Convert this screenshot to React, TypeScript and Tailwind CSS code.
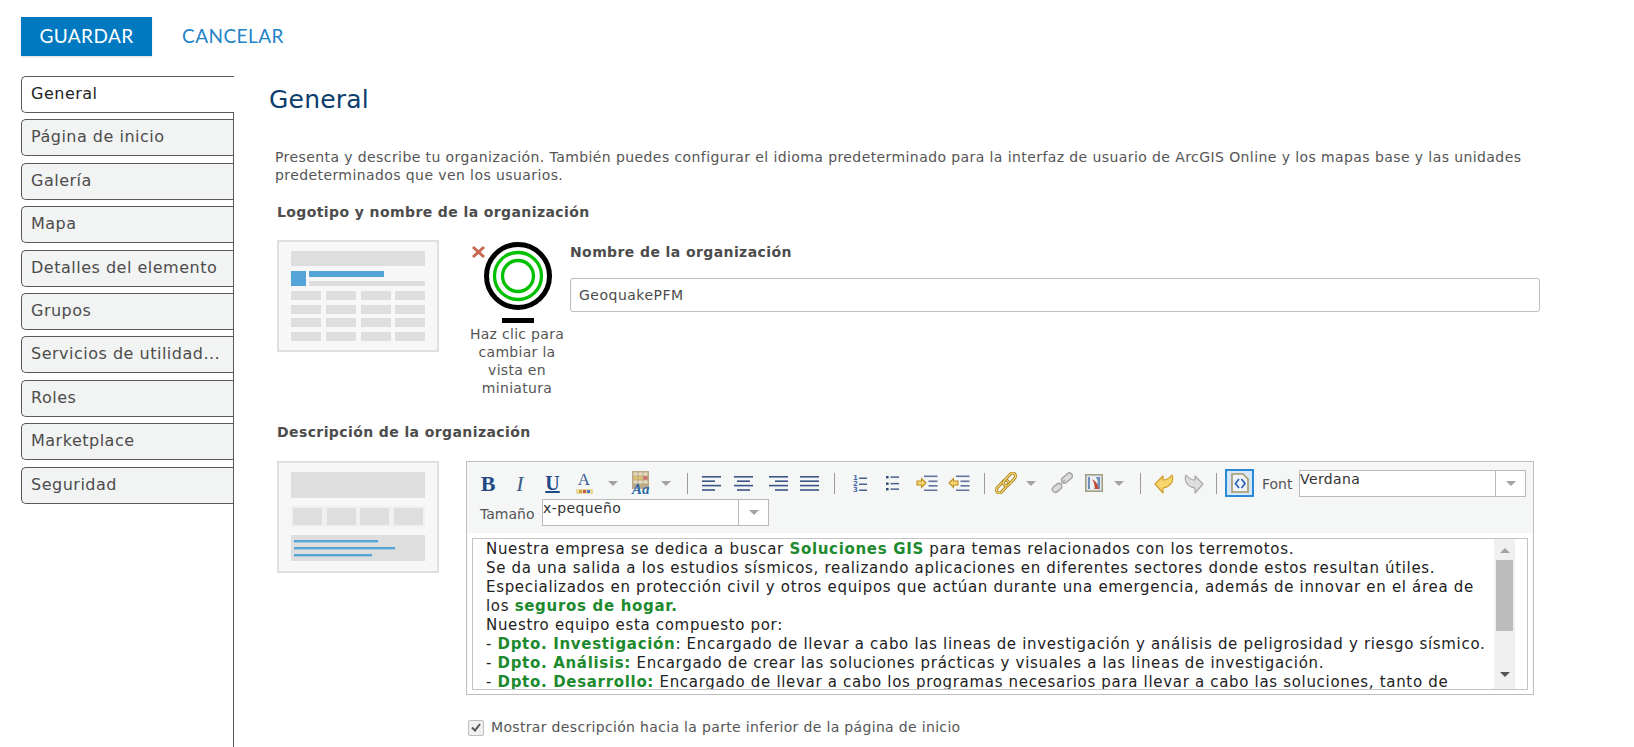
import type { ReactNode } from "react";

const tabs = [
  "General",
  "Página de inicio",
  "Galería",
  "Mapa",
  "Detalles del elemento",
  "Grupos",
  "Servicios de utilidad...",
  "Roles",
  "Marketplace",
  "Seguridad",
];

function Tool({ className, children }: { className: string; children?: ReactNode }) {
  return <div className={`flex h-[28px] shrink-0 items-center justify-center ${className}`}>{children}</div>;
}

function Sep({ className }: { className: string }) {
  return (
    <Tool className={className}>
      <div className="h-[21px] w-px bg-[#9a9a9a]" />
    </Tool>
  );
}

function Caret({ className }: { className: string }) {
  return (
    <Tool className={className}>
      <div className="h-0 w-0 border-x-[5px] border-t-[5px] border-x-transparent border-t-[#a3a3a3]" />
    </Tool>
  );
}

function Lines({ kind }: { kind: "left" | "center" | "right" | "justify" }) {
  const rows: Record<string, [number, number][]> = {
    left: [[0, 19], [0, 13], [0, 19], [0, 13]],
    center: [[0, 19], [3, 13], [0, 19], [3, 13]],
    right: [[0, 19], [6, 13], [0, 19], [6, 13]],
    justify: [[0, 19], [0, 19], [0, 19], [0, 19]],
  };
  return (
    <svg width="19" height="16" viewBox="0 0 19 16">
      {rows[kind].map(([x, w], i) => (
        <rect key={i} x={x} y={1 + i * 4.4} width={w} height="1.6" fill="#3c5488" />
      ))}
    </svg>
  );
}

function NumberedIcon() {
  return (
    <svg width="14" height="20" viewBox="0 0 14 20">
      {["1", "2", "3"].map((n, i) => (
        <g key={n}>
          <text x="0" y={7 + i * 6} fontFamily="DejaVu Sans, sans-serif" fontWeight="700" fontSize="7" fill="#4a6aa5">
            {n}
          </text>
          <rect x="6" y={4.5 + i * 6} width="8" height="1.5" fill="#4a6090" />
        </g>
      ))}
    </svg>
  );
}

function BulletIcon() {
  return (
    <svg width="13" height="18" viewBox="0 0 13 18">
      {[3, 9.5, 15].map((y) => (
        <g key={y}>
          <rect x="0" y={y - 1} width="2.6" height="2.4" fill="#33497a" />
          <rect x="4.5" y={y - 0.6} width="8.5" height="1.5" fill="#4a6090" />
        </g>
      ))}
    </svg>
  );
}

function IndentIcon({ out }: { out?: boolean }) {
  return (
    <svg width="22" height="16" viewBox="0 0 22 16">
      <rect x="8" y="0.5" width="13.5" height="1.6" fill="#6273a0" />
      <rect x="12.5" y="5.5" width="9" height="1.6" fill="#6273a0" />
      <rect x="12.5" y="10" width="9" height="1.6" fill="#6273a0" />
      <rect x="8" y="14.5" width="13.5" height="1.6" fill="#6273a0" />
      <path
        d={out ? "M1 8 L5.5 3.5 V6 H10 V10 H5.5 V12.5 Z" : "M10 8 L5.5 3.5 V6 H1 V10 H5.5 V12.5 Z"}
        fill="#f6d675"
        stroke="#c08a1e"
        strokeWidth="1.1"
      />
    </svg>
  );
}

function LinkIcon() {
  return (
    <svg width="22" height="22" viewBox="0 0 22 22">
      {[
        [7.5, 14.5],
        [14.5, 7.5],
      ].map(([cx, cy]) => (
        <g key={cx} transform={`rotate(-48 ${cx} ${cy})`}>
          <rect x={cx - 7.5} y={cy - 3} width="15" height="6" rx="3" fill="none" stroke="#a87c1c" strokeWidth="3" />
          <rect x={cx - 7.5} y={cy - 3} width="15" height="6" rx="3" fill="none" stroke="#f3d672" strokeWidth="1.4" />
        </g>
      ))}
    </svg>
  );
}

function UnlinkIcon() {
  return (
    <svg width="22" height="22" viewBox="0 0 22 22">
      <g transform="rotate(-40 6 16)">
        <rect x="1" y="13" width="10" height="6" rx="2.5" fill="#dcdcdc" stroke="#a2a2a2" strokeWidth="1.4" />
      </g>
      <g transform="rotate(-40 16 6)">
        <rect x="10" y="3" width="12" height="6" rx="2.5" fill="#dcdcdc" stroke="#a2a2a2" strokeWidth="1.4" />
      </g>
      <path d="M9 13 L14 8" stroke="#b4b4b4" strokeWidth="2" />
    </svg>
  );
}

function ImageIcon() {
  return (
    <svg width="18" height="18" viewBox="0 0 18 18">
      <rect x="0.75" y="0.75" width="16.5" height="16.5" fill="#dfe6ee" stroke="#a09c80" strokeWidth="1.5" />
      <rect x="3" y="3" width="12" height="12" fill="#6d90bd" />
      <path d="M5 3 H11 L13 8 L9 15 H5 Z" fill="#eef1f4" />
      <path d="M7 5 L11 8 L14 15 H10 L9 9 Z" fill="#c8492f" />
    </svg>
  );
}

function TurnIcon({ redo }: { redo?: boolean }) {
  return (
    <svg width="21" height="21" viewBox="0 0 21 21" className={redo ? "-scale-x-100" : ""}>
      <path
        d="M1 11 L9 3 V7 C12 7 15 6 18 2 C20.5 8 16 14 9 15 V20 Z"
        fill={redo ? "#dedede" : "#f8d66d"}
        stroke={redo ? "#a8a8a8" : "#d09c2a"}
        strokeWidth="1.2"
        strokeLinejoin="round"
      />
    </svg>
  );
}

function OrgThumb() {
  const xs = [291, 326, 361, 395];
  const ys = [291, 305, 318, 332];
  return (
    <svg width="162" height="112" viewBox="277 240 162 112" className="shrink-0">
      <rect x="278" y="241" width="160" height="110" fill="#f7f7f7" stroke="#e0e0e0" strokeWidth="2" />
      <rect x="291" y="251" width="134" height="15" fill="#dedede" />
      <rect x="291" y="271" width="15" height="15" fill="#56a5d9" />
      <rect x="309" y="271" width="75" height="6" fill="#56a5d9" />
      <rect x="309" y="281" width="116" height="5" fill="#dedede" />
      {ys.map((y) => xs.map((x) => <rect key={`${x}-${y}`} x={x} y={y} width="30" height="9" fill="#dedede" />))}
    </svg>
  );
}

function DescThumb() {
  return (
    <svg width="162" height="112" viewBox="277 461 162 112" className="shrink-0">
      <rect x="278" y="462" width="160" height="110" fill="#f7f7f7" stroke="#e0e0e0" strokeWidth="2" />
      <rect x="291" y="472" width="134" height="26" fill="#dedede" />
      <rect x="291" y="506" width="134" height="21" fill="#f0f0f0" />
      {[293, 327, 360, 394].map((x) => (
        <rect key={x} x={x} y="508" width="29" height="17" fill="#dedede" />
      ))}
      <rect x="291" y="535" width="134" height="26" fill="#dedede" />
      <rect x="294" y="540" width="84" height="2.4" fill="#56a5d9" />
      <rect x="294" y="547" width="101" height="2.4" fill="#56a5d9" />
      <rect x="294" y="554" width="78" height="2.4" fill="#56a5d9" />
    </svg>
  );
}

function Select({ value, className }: { value: string; className: string }) {
  return (
    <div className={`flex h-[27px] border border-[#b9b9b9] bg-white ${className}`}>
      <div className="min-w-0 flex-1 text-[14px] leading-[17px] tracking-[0.4px] text-[#333]">{value}</div>
      <div className="flex w-[30px] items-center justify-center border-l border-[#b9b9b9]">
        <div className="h-0 w-0 border-x-[5px] border-t-[5px] border-x-transparent border-t-[#a3a3a3]" />
      </div>
    </div>
  );
}

export default function App() {
  return (
    <div className="flex h-[747px] flex-col overflow-hidden bg-white font-['DejaVu_Sans',Verdana,sans-serif] text-[#4c4c4c]">
      <div className="flex items-center pl-[21px] pt-[17px] font-['Lato',sans-serif] text-[19px]">
        <button className="h-[39px] w-[131px] bg-[#0079c1] tracking-[0.4px] text-white shadow-[0_1px_2px_rgba(0,0,0,0.15)]">
          GUARDAR
        </button>
        <button className="ml-[30px] tracking-[0.45px] text-[#1f84c6]">CANCELAR</button>
      </div>

      <div className="mt-[20px] flex min-h-0 flex-1">
        <nav className="ml-[21px] flex w-[213px] shrink-0 flex-col gap-[6.4px] border-r border-[#595959]">
          {tabs.map((t, i) => (
            <div
              key={t}
              className={`flex h-[37px] shrink-0 items-center rounded-l-[5px] border border-r-0 border-[#595959] pb-[1px] pl-[9px] text-[16px] tracking-[0.5px] ${
                i === 0 ? "-mr-px bg-white text-[#222]" : "bg-[#f2f3f3] text-[#4c4c4c]"
              }`}
            >
              {t}
            </div>
          ))}
        </nav>

        <main className="min-w-0 flex-1 pl-[35px]">
          <h1 className="pt-[5px] text-[25px] leading-[38px] tracking-[0.2px] text-[#0b3d6d]">General</h1>
          <p className="ml-[6px] mt-[29px] w-[1270px] text-[14px] leading-[18px] tracking-[0.41px] text-[#555]">
            Presenta y describe tu organización. También puedes configurar el idioma predeterminado para la interfaz de
            usuario de ArcGIS Online y los mapas base y las unidades predeterminados que ven los usuarios.
          </p>
          <h2 className="ml-[8px] mt-[19px] text-[14px] font-bold leading-[18px] tracking-[0.4px] text-[#4c4c4c]">
            Logotipo y nombre de la organización
          </h2>

          <div className="ml-[8px] mt-[19px] flex">
            <OrgThumb />
            <div className="ml-[20px] w-[110px] shrink-0 text-center text-[14px] leading-[18px] tracking-[0.3px] text-[#555]">
              <svg width="110" height="85" viewBox="459 240 110 85" className="block">
                <path d="M473 247 L484 257 M484 247 L473 257" stroke="#c8694f" strokeWidth="3" />
                <circle cx="518" cy="276" r="31.5" fill="none" stroke="#000" strokeWidth="5" />
                <circle cx="518" cy="276" r="23.5" fill="none" stroke="#00c000" strokeWidth="3.3" />
                <circle cx="518" cy="276" r="15.5" fill="none" stroke="#00c000" strokeWidth="3.3" />
                <rect x="502" y="318" width="32" height="5" fill="#000" />
              </svg>
              <div className="ml-[8px] w-[100px]">Haz clic para cambiar la vista en miniatura</div>
            </div>
            <div className="ml-[1px] flex-1">
              <div className="mt-[3px] text-[14px] font-bold leading-[18px] tracking-[0.4px] text-[#4c4c4c]">
                Nombre de la organización
              </div>
              <div className="mt-[17px] flex h-[34px] w-[970px] items-center rounded-[3px] border border-[#bdbdbd] pl-[8px] text-[14px] tracking-[0.5px] text-[#4c4c4c]">
                GeoquakePFM
              </div>
            </div>
          </div>

          <h2 className="ml-[8px] mt-[26px] text-[14px] font-bold leading-[18px] tracking-[0.4px] text-[#4c4c4c]">
            Descripción de la organización
          </h2>

          <div className="ml-[8px] mt-[20px] flex">
            <DescThumb />
            <div className="ml-[27px] h-[234px] w-[1068px] shrink-0 border border-[#bdbdbd] bg-white">
              <div className="h-[71px] bg-[#f5f7f7] pl-[5px] pt-[6px]">
                <div className="flex h-[30px] items-center">
                  <Tool className="w-[32px] font-['Liberation_Serif',serif] text-[22px] font-bold text-[#1f4a86]">B</Tool>
                  <Tool className="w-[32px] font-['Liberation_Serif',serif] text-[22px] italic text-[#3c5d86]">I</Tool>
                  <Tool className="w-[33px] font-['Liberation_Serif',serif] text-[20px] font-bold text-[#1f4a86] underline">U</Tool>
                  <Tool className="w-[30px]">
                    <div className="flex flex-col items-center font-['Liberation_Serif',serif] text-[17px] leading-[14px] text-[#3c5d96]">
                      A
                      <svg width="17" height="5" viewBox="0 0 17 5" className="mt-[2px]">
                        <rect width="17" height="5" fill="#e8d9a0" />
                        <rect x="3" y="1" width="3" height="3" fill="#c9a53a" />
                        <rect x="7" y="1" width="3" height="3" fill="#d05a4a" />
                        <rect x="11" y="1" width="3" height="3" fill="#3f78d0" />
                      </svg>
                    </div>
                  </Tool>
                  <Caret className="w-[28px]" />
                  <Tool className="w-[28px]">
                    <svg width="20" height="24" viewBox="0 0 20 24">
                      <rect x="1" y="0" width="17" height="18" fill="#b8a98a" />
                      {[0, 1, 2].map((r) =>
                        [0, 1, 2].map((c) => (
                          <rect
                            key={`${r}${c}`}
                            x={2.5 + c * 5}
                            y={1.5 + r * 4}
                            width="4"
                            height="3"
                            fill={r === 1 && c === 2 ? "#d86a6a" : r === 1 ? "#e2c46a" : "#e8dcc0"}
                          />
                        )),
                      )}
                      <text x="1" y="23" fontFamily="Liberation Serif, serif" fontStyle="italic" fontWeight="700" fontSize="15" fill="#2b6aa8">
                        Aa
                      </text>
                    </svg>
                  </Tool>
                  <Caret className="w-[22px]" />
                  <Sep className="w-[20px]" />
                  <Tool className="w-[29px]"><Lines kind="left" /></Tool>
                  <Tool className="w-[35px]"><Lines kind="center" /></Tool>
                  <Tool className="w-[34px]"><Lines kind="right" /></Tool>
                  <Tool className="w-[29px]"><Lines kind="justify" /></Tool>
                  <Sep className="w-[21px]" />
                  <Tool className="w-[29px]"><NumberedIcon /></Tool>
                  <Tool className="w-[36px]"><BulletIcon /></Tool>
                  <Tool className="w-[34px]"><IndentIcon /></Tool>
                  <Tool className="w-[29px]"><IndentIcon out /></Tool>
                  <Sep className="w-[22px]" />
                  <Tool className="w-[22px]"><LinkIcon /></Tool>
                  <Caret className="w-[28px]" />
                  <Tool className="w-[34px]"><UnlinkIcon /></Tool>
                  <Tool className="w-[29px]"><ImageIcon /></Tool>
                  <Caret className="w-[22px]" />
                  <Sep className="w-[20px]" />
                  <Tool className="w-[29px]"><TurnIcon /></Tool>
                  <Tool className="w-[29px]"><TurnIcon redo /></Tool>
                  <Sep className="w-[17px]" />
                  <div className="flex h-[28px] w-[29px] shrink-0 items-center justify-center border-2 border-[#2b8ad8] bg-[#d5e6f8]">
                    <svg width="18" height="20" viewBox="0 0 18 20">
                      <path d="M1 1 H12 L17 6 V19 H1 Z" fill="#eef3fb" stroke="#a89868" strokeWidth="1.6" />
                      <path d="M8 6 L4.5 10.5 L8 15 M10.5 6 L14 10.5 L10.5 15" fill="none" stroke="#2d63ac" strokeWidth="1.7" />
                    </svg>
                  </div>
                  <div className="ml-[8px] mt-[3px] w-[37px] shrink-0 text-[14px] text-[#555]">Font</div>
                  <Select value="Verdana" className="w-[227px] shrink-0" />
                </div>
                <div className="mt-[1px] flex items-center pl-[8px]">
                  <div className="mt-[4px] w-[62px] shrink-0 text-[14px] text-[#555]">Tamaño</div>
                  <Select value="x-pequeño" className="w-[227px]" />
                </div>
              </div>

              <div className="mx-[5px] mt-[5px] flex h-[152px] border border-[#c4c4c4] bg-white">
                <div className="min-w-0 flex-1 overflow-hidden pl-[13px] pt-[1px] text-[15px] leading-[19px] tracking-[0.68px] text-[#222]">
                  Nuestra empresa se dedica a buscar <b className="text-[#1e8a2e]">Soluciones GIS</b> para temas relacionados
                  con los terremotos.
                  <br />
                  Se da una salida a los estudios sísmicos, realizando aplicaciones en diferentes sectores donde estos
                  resultan útiles.
                  <br />
                  Especializados en protección civil y otros equipos que actúan durante una emergencia, además de innovar en
                  el área de <br />
                  los <b className="text-[#1e8a2e]">seguros de hogar.</b>
                  <br />
                  Nuestro equipo esta compuesto por:
                  <br />- <b className="text-[#1e8a2e]">Dpto. Investigación</b>: Encargado de llevar a cabo las lineas de
                  investigación y análisis de peligrosidad y riesgo sísmico.
                  <br />- <b className="text-[#1e8a2e]">Dpto. Análisis:</b> Encargado de crear las soluciones prácticas y
                  visuales a las lineas de investigación.
                  <br />- <b className="text-[#1e8a2e]">Dpto. Desarrollo:</b> Encargado de llevar a cabo los programas
                  necesarios para llevar a cabo las soluciones, tanto de
                </div>
                <div className="mr-[12px] flex w-[21px] shrink-0 flex-col items-center bg-[#f0f0f0]">
                  <div className="mt-[9px] h-0 w-0 border-x-[5px] border-b-[5px] border-x-transparent border-b-[#a3a3a3]" />
                  <div className="mt-[7px] h-[71px] w-[17px] bg-[#bcbcbc]" />
                  <div className="mt-[41px] h-0 w-0 border-x-[5px] border-t-[5px] border-x-transparent border-t-[#555]" />
                </div>
              </div>
            </div>
          </div>

          <label className="ml-[199px] mt-[22px] flex items-center text-[14px] tracking-[0.33px] text-[#555]">
            <span className="flex h-[16px] w-[16px] items-center justify-center rounded-[2px] border border-[#bdbdbd] bg-[#f0f0f0]">
              <svg width="10" height="9" viewBox="0 0 10 9">
                <path d="M1 4.5 L4 7.5 L9 1" fill="none" stroke="#555" strokeWidth="2" />
              </svg>
            </span>
            <span className="ml-[7px]">Mostrar descripción hacia la parte inferior de la página de inicio</span>
          </label>
        </main>
      </div>
    </div>
  );
}
